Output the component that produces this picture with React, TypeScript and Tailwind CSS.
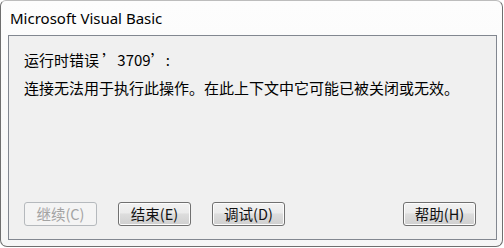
const cjk = '"Noto Sans CJK SC", "Noto Sans", sans-serif';

function DlgButton({ label, disabled }: { label: string; disabled?: boolean }) {
  return (
    <button
      disabled={disabled}
      className={`w-[73px] h-[24px] rounded-[3px] border text-[14.5px] leading-none flex items-center justify-center ${
        disabled
          ? 'border-[#b5b9bd] bg-[#f4f4f4] text-[#a3a3a3]'
          : 'border-[#707070] bg-[linear-gradient(to_bottom,#f2f2f2_0%,#ebebeb_45%,#dddddd_50%,#cfcfcf_100%)] text-[#111] shadow-[inset_0_0_0_1px_#fcfcfc]'
      }`}
      style={{ fontFamily: cjk }}
    >
      {label}
    </button>
  );
}

export default function App() {
  return (
    <div className="w-[504px] h-[248px] bg-white">
      <div className="w-[503px] h-[247px] box-border border border-[#6f6f6f] border-t-[#bdbdbd] rounded-[7px] rounded-tl-[6px] bg-[linear-gradient(to_bottom,#fdfdfd,#f6f6f6)] flex flex-col">
        <div
          className="h-[34px] pl-[9px] flex items-center text-[15px] text-black"
          style={{ fontFamily: '"Noto Sans", sans-serif' }}
        >
          Microsoft Visual Basic
        </div>
        <div className="ml-[7px] w-[489px] h-[205px] box-border border border-[#828790] bg-[#f0f0f0] flex flex-col justify-between">
          <div className="pl-[15px] pt-[10px] text-[15px] text-black" style={{ fontFamily: cjk }}>
            <div className="h-[28px] flex items-center">运行时错误 ’3709’:</div>
            <div className="h-[28px] flex items-center">连接无法用于执行此操作。在此上下文中它可能已被关闭或无效。</div>
          </div>
          <div className="flex items-center pl-[15px] pr-[20px] pb-[13px]">
            <div className="flex gap-[21px]">
              <DlgButton label="继续(C)" disabled />
              <DlgButton label="结束(E)" />
              <DlgButton label="调试(D)" />
            </div>
            <div className="flex-1" />
            <DlgButton label="帮助(H)" />
          </div>
        </div>
      </div>
    </div>
  );
}
